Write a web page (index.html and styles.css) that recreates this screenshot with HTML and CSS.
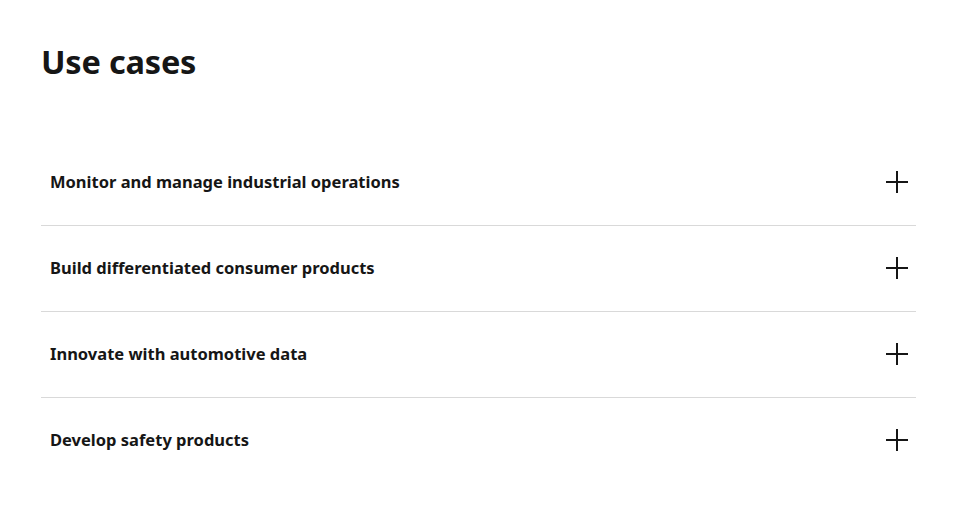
FILE: index.html
```html
<!DOCTYPE html>
<html lang="en">
<head>
<meta charset="utf-8">
<title>Use cases</title>
<link rel="stylesheet" href="styles.css">
</head>
<body>
<main class="section">
  <h2 class="title">Use cases</h2>
  <div class="accordion">
    <div class="item">
      <span class="label">Monitor and manage industrial operations</span>
      <svg class="plus" width="22" height="22" viewBox="0 0 22 22"><path d="M11 0V22M0 11H22" stroke="#161616" stroke-width="2" fill="none"/></svg>
    </div>
    <div class="item">
      <span class="label">Build differentiated consumer products</span>
      <svg class="plus" width="22" height="22" viewBox="0 0 22 22"><path d="M11 0V22M0 11H22" stroke="#161616" stroke-width="2" fill="none"/></svg>
    </div>
    <div class="item">
      <span class="label">Innovate with automotive data</span>
      <svg class="plus" width="22" height="22" viewBox="0 0 22 22"><path d="M11 0V22M0 11H22" stroke="#161616" stroke-width="2" fill="none"/></svg>
    </div>
    <div class="item">
      <span class="label">Develop safety products</span>
      <svg class="plus" width="22" height="22" viewBox="0 0 22 22"><path d="M11 0V22M0 11H22" stroke="#161616" stroke-width="2" fill="none"/></svg>
    </div>
  </div>
</main>
</body>
</html>
```
FILE: styles.css
```css
* { box-sizing: border-box; }
body {
  margin: 0;
  background: #ffffff;
  font-family: "Noto Sans", "Open Sans", sans-serif;
  color: #161616;
}
.section {
  padding: 40px 41px 0 41px;
  width: 957px;
}
.title {
  margin: 0;
  font-size: 32.5px;
  line-height: 44px;
  font-weight: 700;
  letter-spacing: -0.2px;
}
.accordion {
  margin-top: 56px;
  width: 875px;
}
.item {
  display: flex;
  align-items: center;
  justify-content: space-between;
  height: 86px;
  padding: 0 8px 2px 9px;
  border-bottom: 1px solid #d9d9d9;
}
.item:last-child {
  border-bottom: none;
}
.label {
  font-size: 16.5px;
  font-weight: 700;
  line-height: 24px;
}
.plus {
  display: block;
}
```
